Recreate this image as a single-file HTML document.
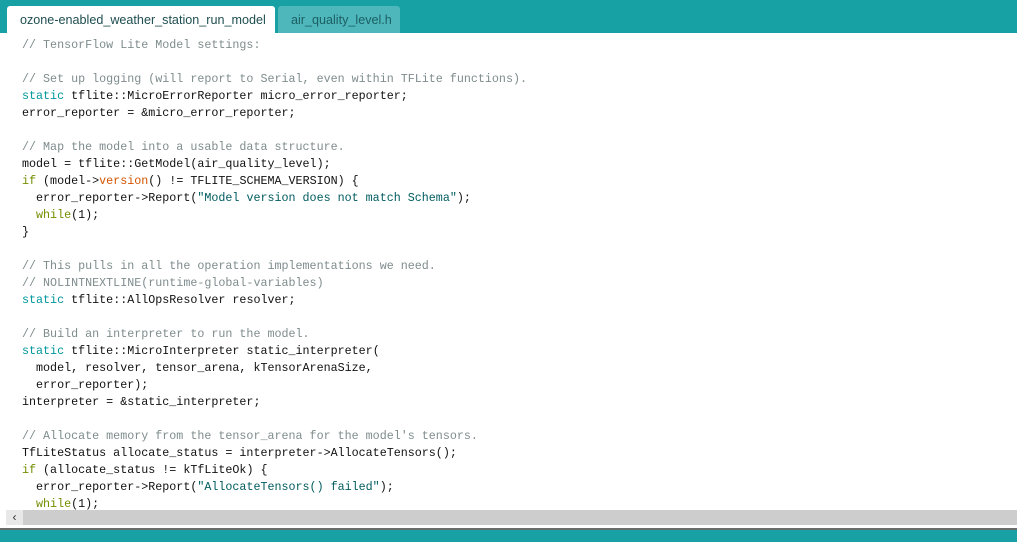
<!DOCTYPE html>
<html><head><meta charset="utf-8"><style>
html,body{margin:0;padding:0;width:1017px;height:542px;overflow:hidden;background:#fff;font-family:"Liberation Sans",sans-serif}
.hdr{position:absolute;left:0;top:0;width:1017px;height:33px;background:#17a1a5}
.tab{position:absolute;top:6px;height:27px;font-size:12.6px;line-height:29px;border-radius:3px 3px 0 0;box-sizing:border-box}
.t1{left:7px;width:268px;background:#fff;color:#1f4e50;padding-left:13px}
.t2{left:278px;width:122px;background:#4db7bb;color:#1d5f62;padding-left:13px}
pre{position:absolute;left:22px;top:37px;margin:0;font-family:"Liberation Mono",monospace;font-size:11.7px;line-height:17px;color:#111}
.c{color:#7f8c8d}.k{color:#00979c}.o{color:#728e00}.f{color:#d35400}.s{color:#005c5f}
.sb{position:absolute;left:6px;top:510px;width:1011px;height:15px;background:#cdcdcd}
.sbb{position:absolute;left:6px;top:510px;width:17px;height:15px;background:#e8e8e8;font-size:12px;line-height:15px;text-align:center;color:#333}
.ln{position:absolute;left:0;top:528px;width:1017px;height:2px;background:#6a6a6a}
.ft{position:absolute;left:0;top:530px;width:1017px;height:12px;background:#17a1a5}
</style></head><body>
<div class="hdr"></div>
<div class="tab t1">ozone-enabled_weather_station_run_model</div>
<div class="tab t2">air_quality_level.h</div>
<pre><span class="c">// TensorFlow Lite Model settings:</span>

<span class="c">// Set up logging (will report to Serial, even within TFLite functions).</span>
<span class="k">static</span> tflite::MicroErrorReporter micro_error_reporter;
error_reporter = &amp;micro_error_reporter;

<span class="c">// Map the model into a usable data structure.</span>
model = tflite::GetModel(air_quality_level);
<span class="o">if</span> (model-&gt;<span class="f">version</span>() != TFLITE_SCHEMA_VERSION) {
  error_reporter-&gt;Report(<span class="s">"Model version does not match Schema"</span>);
  <span class="o">while</span>(1);
}

<span class="c">// This pulls in all the operation implementations we need.</span>
<span class="c">// NOLINTNEXTLINE(runtime-global-variables)</span>
<span class="k">static</span> tflite::AllOpsResolver resolver;

<span class="c">// Build an interpreter to run the model.</span>
<span class="k">static</span> tflite::MicroInterpreter static_interpreter(
  model, resolver, tensor_arena, kTensorArenaSize,
  error_reporter);
interpreter = &amp;static_interpreter;

<span class="c">// Allocate memory from the tensor_arena for the model's tensors.</span>
TfLiteStatus allocate_status = interpreter-&gt;AllocateTensors();
<span class="o">if</span> (allocate_status != kTfLiteOk) {
  error_reporter-&gt;Report(<span class="s">"AllocateTensors() failed"</span>);
  <span class="o">while</span>(1);</pre>
<div class="sb"></div>
<div class="sbb">&lsaquo;</div>
<div class="ln"></div>
<div class="ft"></div>
</body></html>
